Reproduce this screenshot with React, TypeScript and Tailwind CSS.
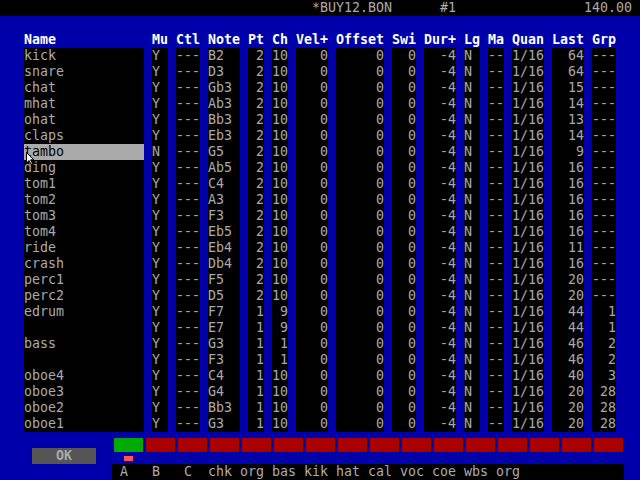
const font = { fontFamily: '"DejaVu Sans Mono", "Liberation Mono", monospace' };

type Col = { h: string; w: string; right?: boolean };

const cols: Col[] = [
  { h: "Name", w: "w-[120px]" },
  { h: "Mu", w: "w-[16px]" },
  { h: "Ctl", w: "w-[24px]" },
  { h: "Note", w: "w-[32px]" },
  { h: "Pt", w: "w-[16px]", right: true },
  { h: "Ch", w: "w-[16px]", right: true },
  { h: "Vel+", w: "w-[32px]", right: true },
  { h: "Offset", w: "w-[48px]", right: true },
  { h: "Swi", w: "w-[24px]", right: true },
  { h: "Dur+", w: "w-[32px]", right: true },
  { h: "Lg", w: "w-[16px]" },
  { h: "Ma", w: "w-[16px]" },
  { h: "Quan", w: "w-[32px]" },
  { h: "Last", w: "w-[32px]", right: true },
  { h: "Grp", w: "w-[24px]", right: true },
];

// name, mute, note, port, chan, last, grp
const tracks: [string, string, string, string, string, string, string][] = [
  ["kick", "Y", "B2", "2", "10", "64", "---"],
  ["snare", "Y", "D3", "2", "10", "64", "---"],
  ["chat", "Y", "Gb3", "2", "10", "15", "---"],
  ["mhat", "Y", "Ab3", "2", "10", "14", "---"],
  ["ohat", "Y", "Bb3", "2", "10", "13", "---"],
  ["claps", "Y", "Eb3", "2", "10", "14", "---"],
  ["tambo", "N", "G5", "2", "10", "9", "---"],
  ["ding", "Y", "Ab5", "2", "10", "16", "---"],
  ["tom1", "Y", "C4", "2", "10", "16", "---"],
  ["tom2", "Y", "A3", "2", "10", "16", "---"],
  ["tom3", "Y", "F3", "2", "10", "16", "---"],
  ["tom4", "Y", "Eb5", "2", "10", "16", "---"],
  ["ride", "Y", "Eb4", "2", "10", "11", "---"],
  ["crash", "Y", "Db4", "2", "10", "16", "---"],
  ["perc1", "Y", "F5", "2", "10", "20", "---"],
  ["perc2", "Y", "D5", "2", "10", "20", "---"],
  ["edrum", "Y", "F7", "1", "9", "44", "1"],
  ["", "Y", "E7", "1", "9", "44", "1"],
  ["bass", "Y", "G3", "1", "1", "46", "2"],
  ["", "Y", "F3", "1", "1", "46", "2"],
  ["oboe4", "Y", "C4", "1", "10", "40", "3"],
  ["oboe3", "Y", "G4", "1", "10", "20", "28"],
  ["oboe2", "Y", "Bb3", "1", "10", "20", "28"],
  ["oboe1", "Y", "G3", "1", "10", "20", "28"],
];

const rows = tracks.map(([name, mu, note, pt, ch, last, grp]) => [
  name, mu, "---", note, pt, ch, "0", "0", "0", "-4", "N", "--", "1/16", last, grp,
]);

const groups = ["A", "B", "C", "chk", "org", "bas", "kik", "hat", "cal", "voc", "coe", "wbs", "org"];

export default function App() {
  return (
    <div className="w-[640px] h-[480px] bg-[#0000aa] text-[#aaaaaa] text-[13.3px] leading-[16px] relative overflow-hidden flex flex-col" style={font}>
      {/* title bar */}
      <div className="h-[16px] bg-black flex pl-[312px] pr-[8px] whitespace-pre">
        <span className="w-[128px]">*BUY12.BON</span>
        <span>#1</span>
        <span className="ml-auto">140.00</span>
      </div>

      <div className="h-[16px]"></div>

      {/* track table */}
      <div className="flex pl-[24px] gap-[8px]">
        {cols.map((c, ci) => (
          <div key={c.h} className={`${c.w} flex flex-col`}>
            <div className="h-[16px] text-white font-bold whitespace-pre">{c.h}</div>
            <div className="bg-black flex flex-col">
              {rows.map((r, ri) => {
                const sel = ci === 0 && ri === 6;
                return (
                  <div
                    key={ri}
                    className={`h-[16px] whitespace-pre ${c.right ? "text-right" : ""} ${sel ? "bg-[#aaaaaa] text-black" : ""}`}
                  >
                    {r[ci]}
                  </div>
                );
              })}
            </div>
          </div>
        ))}
      </div>

      {/* bottom area */}
      <div className="flex h-[48px]">
        <div className="w-[112px] pl-[32px] pt-[16px]">
          <div className="w-[64px] h-[16px] bg-[#555555] text-[#aaaaaa] font-bold text-center">OK</div>
        </div>
        <div className="flex flex-col">
          <div className="flex gap-[3px] pl-[2px] pt-[6px]">
            {Array.from({ length: 16 }).map((_, i) => (
              <div key={i} className={`w-[29px] h-[14px] ${i === 0 ? "bg-[#00aa00]" : "bg-[#aa0000]"}`}></div>
            ))}
          </div>
          <div className="ml-[12px] mt-[4px] w-[9px] h-[5px] bg-[#ff5555]"></div>
          <div className="mt-[3px] w-[512px] h-[16px] bg-black flex whitespace-pre">
            {groups.map((g, i) => (
              <span key={i} className="w-[32px]">{g.length === 1 ? " " + g : g}</span>
            ))}
          </div>
        </div>
      </div>

      {/* mouse pointer */}
      <svg className="absolute left-[26px] top-[152px]" width="10" height="14" viewBox="0 0 10 14">
        <path d="M0.5 0.5 L0.5 11 L3 8.5 L5 12.5 L6.5 11.8 L4.6 7.8 L8 7.8 Z" fill="#ffffff" stroke="#000000" strokeWidth="1" />
      </svg>
    </div>
  );
}
